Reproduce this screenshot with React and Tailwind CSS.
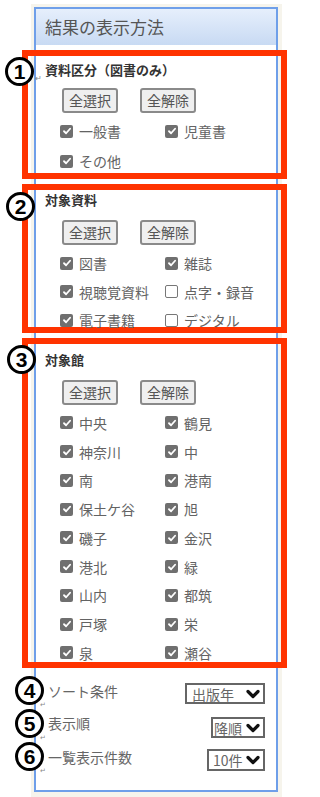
import React from 'react';

const jp = "font-['Noto_Sans_CJK_JP','Liberation_Sans',sans-serif]";

function Check({ on }) {
	if (!on) {
		return <span className="h-[13px] w-[13px] shrink-0 rounded-[2px] border-[1.5px] border-[#777] bg-white" />;
	}
	return (
		<span className="flex h-[13px] w-[13px] shrink-0 items-center justify-center rounded-[2px] bg-[#6f6f6f]">
			<svg viewBox="0 0 12 12" className="h-[10px] w-[10px]">
				<path d="M2.4 6.3 4.9 8.7 9.7 3.3" fill="none" stroke="white" strokeWidth="2.2" strokeLinecap="round" strokeLinejoin="round" />
			</svg>
		</span>
	);
}

function Buttons() {
	return (
		<div className="flex gap-[22px] pl-[34px]">
			{['全選択', '全解除'].map((t) => (
				<button
					key={t}
					className="flex h-[25px] w-[56px] items-center justify-center rounded-[3px] border-2 border-[#8a8a8a] bg-[#efefef] text-[14px] text-[#555]"
				>
					{t}
				</button>
			))}
		</div>
	);
}

function Items({ items, rowClass }) {
	return (
		<div className="grid grid-cols-[105px_105px] pl-[32px]">
			{items.map(([label, on]) => (
				<div key={label} className={'flex items-center gap-[6px] ' + rowClass}>
					<Check on={on} />
					<span className="whitespace-nowrap text-[14px] leading-none text-[#636363]">{label}</span>
				</div>
			))}
		</div>
	);
}

function Section({ title, items, boxClass, titleClass, btnClass, rowsClass, rowClass }) {
	return (
		<div className={'-ml-[14px] -mr-[11px] border-[6px] border-[#ff3300] ' + boxClass}>
			<div className={'pl-[17px] text-[13px] font-bold leading-[16px] text-[#333] ' + titleClass}>{title}</div>
			<div className={btnClass}>
				<Buttons />
			</div>
			<div className={rowsClass}>
				<Items items={items} rowClass={rowClass} />
			</div>
		</div>
	);
}

function Select({ value, widthClass, textClass }) {
	return (
		<div className={'flex h-full items-center justify-between border-2 border-[#666] bg-white pr-[3px] ' + widthClass}>
			<span className={'text-[14px] leading-none text-[#666] ' + textClass}>{value}</span>
			<svg viewBox="0 0 14 10" className="h-[10px] w-[14px]">
				<path d="M2 2.5 7 7.5 12 2.5" fill="none" stroke="#111" strokeWidth="3.2" strokeLinecap="round" strokeLinejoin="round" />
			</svg>
		</div>
	);
}

function Circled({ n, pos }) {
	return (
		<div
			className={
				'absolute flex h-[29px] w-[29px] items-center justify-center rounded-full border-[3px] border-black bg-white ' + pos
			}
		>
			<span className="font-['Liberation_Sans',sans-serif] text-[21px] font-bold leading-none text-black">{n}</span>
		</div>
	);
}

const group1 = [
	['一般書', true],
	['児童書', true],
	['その他', true],
];

const group2 = [
	['図書', true],
	['雑誌', true],
	['視聴覚資料', true],
	['点字・録音', false],
	['電子書籍', true],
	['デジタル', false],
];

const group3 = [
	['中央', true], ['鶴見', true],
	['神奈川', true], ['中', true],
	['南', true], ['港南', true],
	['保土ケ谷', true], ['旭', true],
	['磯子', true], ['金沢', true],
	['港北', true], ['緑', true],
	['山内', true], ['都筑', true],
	['戸塚', true], ['栄', true],
	['泉', true], ['瀬谷', true],
];

export default function App() {
	return (
		<div className={'relative h-[797px] w-[300px] overflow-hidden bg-white pt-[4px] ' + jp}>
			<div className="ml-[31px] h-[793px] w-[251px] bg-[#f6f4ec] pl-[3px] pt-[3px]">
				<div className="h-[785px] w-[244px] border-2 border-[#6f9fe9] bg-white">
					<div className="flex h-[36px] items-center bg-gradient-to-b from-[#e6effc] to-[#c8daf3] pl-[9px] text-[17px] text-[#555]">
						結果の表示方法
					</div>

					<div className="mt-[5px]">
						<Section
							title="資料区分（図書のみ）"
							items={group1}
							boxClass="h-[129px]"
							titleClass="pt-[6px]"
							btnClass="mt-[10px]"
							rowsClass="mt-[3px]"
							rowClass="h-[30px]"
						/>
					</div>

					<div className="mt-[5px]">
						<Section
							title="対象資料"
							items={group2}
							boxClass="h-[149px]"
							titleClass="pt-[2px]"
							btnClass="mt-[12px]"
							rowsClass="mt-[4px]"
							rowClass="h-[28.5px]"
						/>
					</div>

					<div className="mt-[5px]">
						<Section
							title="対象館"
							items={group3}
							boxClass="h-[330px]"
							titleClass="pt-[8px]"
							btnClass="mt-[12px]"
							rowsClass="mt-[3.5px]"
							rowClass="h-[28.75px]"
						/>
					</div>

					<div className="mt-[15px] flex flex-col pl-[12px] pr-[11px]">
						<div className="flex h-[21px] items-start justify-between">
							<span className="text-[14px] leading-[16px] text-[#666]">ソート条件</span>
							<Select value="出版年" widthClass="w-[80px]" textClass="pl-[5px]" />
						</div>
						<div className="mt-[13px] flex h-[21px] items-start justify-between">
							<span className="-mt-[2px] text-[14px] leading-[16px] text-[#666]">表示順</span>
							<Select value="降順" widthClass="w-[54px]" textClass="pl-[1px]" />
						</div>
						<div className="mt-[11px] flex h-[22px] items-start justify-between">
							<span className="text-[14px] leading-[16px] text-[#666]">一覧表示件数</span>
							<Select value="10件" widthClass="w-[58px]" textClass="pl-[4px]" />
						</div>
					</div>
				</div>
			</div>

			<Circled n="1" pos="left-[5px] top-[57px]" />
			<Circled n="2" pos="left-[6px] top-[192px]" />
			<Circled n="3" pos="left-[7px] top-[345px]" />
			<Circled n="4" pos="left-[15px] top-[676px]" />
			<Circled n="5" pos="left-[15px] top-[709px]" />
			<Circled n="6" pos="left-[15px] top-[742px]" />

			<span className="absolute left-[35px] top-[74px] text-[8px] leading-none text-[#888]">↵</span>
			<span className="absolute left-[40px] top-[701px] text-[7px] leading-none text-[#888]">↵</span>
			<span className="absolute left-[40px] top-[734px] text-[7px] leading-none text-[#888]">↵</span>
			<span className="absolute left-[40px] top-[767px] text-[7px] leading-none text-[#888]">↵</span>
		</div>
	);
}
